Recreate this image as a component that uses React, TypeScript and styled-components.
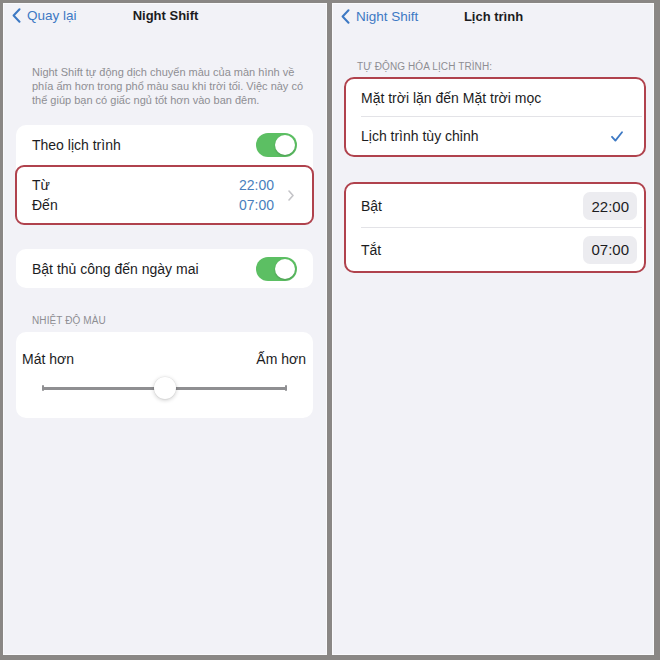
import React from "react";
import styled, { createGlobalStyle } from "styled-components";

const Global = createGlobalStyle`
  html, body { margin: 0; padding: 0; background: #8a8785; }
  body { font-family: "Liberation Sans", Arial, sans-serif; -webkit-font-smoothing: antialiased; }
`;

const BLUE = "#3d79c4";
const RED = "#b0424d";

const Frame = styled.div`
  width: 660px;
  height: 660px;
  box-sizing: border-box;
  padding: 3px 6px 5px 3px;
  display: flex;
  gap: 5px;
  background: #8a8785;
`;

const Panel = styled.div<{ $w: number }>`
  width: ${(p) => p.$w}px;
  height: 652px;
  flex: none;
  background: #f2f2f7;
  display: flex;
  flex-direction: column;
  box-sizing: border-box;
  box-shadow: inset 0 0 0 1px #fafafc;
`;

const NavBar = styled.div<{ $h: number }>`
  display: grid;
  grid-template-columns: 1fr auto 1fr;
  align-items: center;
  height: ${(p) => p.$h}px;
  padding: 0 8px 0 9px;
`;

const BackLink = styled.div`
  display: flex;
  align-items: center;
  gap: 6px;
  color: ${BLUE};
  font-size: 13.5px;
  white-space: nowrap;
`;

const Title = styled.div`
  font-size: 13px;
  font-weight: 700;
  color: #1c1c1e;
  white-space: nowrap;
`;

const Description = styled.p`
  margin: 38px 0 0 29px;
  font-size: 11px;
  line-height: 14px;
  color: #8e8e93;
`;

const Card = styled.div<{ $mt: number }>`
  margin: ${(p) => p.$mt}px 14px 0 13px;
  background: #ffffff;
  border-radius: 10px;
`;

const Row = styled.div<{ $h: number }>`
  display: flex;
  align-items: center;
  justify-content: space-between;
  height: ${(p) => p.$h}px;
  padding: 0 16px;
  font-size: 14px;
  color: #1c1c1e;
`;

const Toggle = styled.div`
  width: 41px;
  height: 24px;
  border-radius: 12px;
  background: #5cbf63;
  position: relative;
  flex: none;
`;

const Knob = styled.div`
  position: absolute;
  right: 2px;
  top: 2px;
  width: 20px;
  height: 20px;
  border-radius: 50%;
  background: #fff;
  box-shadow: 0 1px 2px rgba(0, 0, 0, 0.2);
`;

const InlineHighlight = styled.div`
  margin: 0 -1px;
  height: 60px;
  box-sizing: border-box;
  border: 2px solid ${RED};
  border-radius: 9px;
  display: flex;
  align-items: center;
  padding: 0 18px 0 15px;
  font-size: 14px;
  line-height: 20px;
  color: #1c1c1e;
`;

const Stack = styled.div<{ $align: string; $color: string }>`
  display: flex;
  flex-direction: column;
  align-items: ${(p) => p.$align};
  color: ${(p) => p.$color};
`;

const Spacer = styled.div`
  flex: 1;
`;

const ChevronBox = styled.div`
  margin-left: 14px;
  display: flex;
  align-items: center;
`;

const SectionHeader = styled.div<{ $mt: number; $mb: number; $ml: number }>`
  margin: ${(p) => p.$mt}px 0 ${(p) => p.$mb}px ${(p) => p.$ml}px;
  font-size: 10px;
  line-height: 12px;
  color: #8e8e93;
  text-transform: uppercase;
  letter-spacing: 0.1px;
`;

const SliderCard = styled.div`
  margin: 0 14px 0 13px;
  background: #fff;
  border-radius: 10px;
  padding: 19px 7px 19px 6px;
`;

const SliderLabels = styled.div`
  display: flex;
  justify-content: space-between;
  font-size: 14px;
  line-height: 16px;
  color: #1c1c1e;
`;

const SliderTrack = styled.div`
  position: relative;
  margin: 10px 19px 0 20px;
  height: 22px;
  display: flex;
  align-items: center;
`;

const TrackLine = styled.div`
  flex: 1;
  height: 3px;
  background: #8f8f92;
`;

const TrackCap = styled.div`
  width: 2px;
  height: 6px;
  background: #8f8f92;
  border-radius: 1px;
`;

const Thumb = styled.div`
  position: absolute;
  top: 0;
  width: 22px;
  height: 22px;
  margin-left: -11px;
  border-radius: 50%;
  background: #fff;
  box-shadow: 0 1px 4px rgba(0, 0, 0, 0.22), 0 0 0 0.5px rgba(0, 0, 0, 0.05);
`;

const BoxedGroup = styled.div<{ $mt: number }>`
  margin: ${(p) => p.$mt}px 8px 0 12px;
  background: #fff;
  border: 2px solid ${RED};
  border-radius: 10px;
  overflow: hidden;
`;

const ListRow = styled.div<{ $h: number; $sep?: boolean }>`
  position: relative;
  display: flex;
  align-items: center;
  justify-content: space-between;
  height: ${(p) => p.$h}px;
  padding: 0 7px 0 15px;
  font-size: 14px;
  color: #1c1c1e;
  ${(p) =>
    p.$sep
      ? `&::after { content: ""; position: absolute; left: 15px; right: 2px; bottom: 0; height: 1px; background: #e3e3e7; }`
      : ""}
`;

const CheckWrap = styled.div`
  margin-right: 14px;
  display: flex;
`;

const TimePill = styled.div`
  height: 28px;
  display: flex;
  align-items: center;
  padding: 0 8px;
  border-radius: 7px;
  background: #ececf0;
  font-size: 15px;
  color: #1c1c1e;
`;

const BackChevron = () => (
  <svg width="9" height="15" viewBox="0 0 9 15">
    <path d="M7.5 1.2 L1.6 7.5 L7.5 13.8" fill="none" stroke={BLUE} strokeWidth="2" strokeLinecap="round" strokeLinejoin="round" />
  </svg>
);

const RowChevron = () => (
  <svg width="6" height="11" viewBox="0 0 6 11">
    <path d="M1 1 L5 5.5 L1 10" fill="none" stroke="#c4c4c8" strokeWidth="1.6" strokeLinecap="round" strokeLinejoin="round" />
  </svg>
);

const Check = () => (
  <svg width="12" height="11" viewBox="0 0 12 11">
    <path d="M1 5.8 L4.4 9.6 L11 1.2" fill="none" stroke={BLUE} strokeWidth="1.8" strokeLinecap="round" strokeLinejoin="round" />
  </svg>
);

const Switch = () => (
  <Toggle>
    <Knob />
  </Toggle>
);

export default function App() {
  const warmth = 0.5;
  return (
    <>
      <Global />
      <Frame>
        <Panel $w={324}>
          <NavBar $h={24}>
            <BackLink>
              <BackChevron />
              Quay lại
            </BackLink>
            <Title>Night Shift</Title>
            <div />
          </NavBar>
          <Description>
            Night Shift tự động dịch chuyển màu của màn hình về
            <br />
            phía ấm hơn trong phổ màu sau khi trời tối. Việc này có
            <br />
            thể giúp bạn có giấc ngủ tốt hơn vào ban đêm.
          </Description>
          <Card $mt={18}>
            <Row $h={40}>
              Theo lịch trình
              <Switch />
            </Row>
            <InlineHighlight>
              <Stack $align="flex-start" $color="#1c1c1e">
                <span>Từ</span>
                <span>Đến</span>
              </Stack>
              <Spacer />
              <Stack $align="flex-end" $color="#4a7fbd">
                <span>22:00</span>
                <span>07:00</span>
              </Stack>
              <ChevronBox>
                <RowChevron />
              </ChevronBox>
            </InlineHighlight>
          </Card>
          <Card $mt={24}>
            <Row $h={39}>
              Bật thủ công đến ngày mai
              <Switch />
            </Row>
          </Card>
          <SectionHeader $mt={27} $mb={5} $ml={29}>
            Nhiệt độ màu
          </SectionHeader>
          <SliderCard>
            <SliderLabels>
              <span>Mát hơn</span>
              <span>Ấm hơn</span>
            </SliderLabels>
            <SliderTrack>
              <TrackCap />
              <TrackLine />
              <TrackCap />
              <Thumb style={{ left: `${warmth * 100}%` }} />
            </SliderTrack>
          </SliderCard>
        </Panel>
        <Panel $w={322}>
          <NavBar $h={26}>
            <BackLink>
              <BackChevron />
              Night Shift
            </BackLink>
            <Title>Lịch trình</Title>
            <div />
          </NavBar>
          <SectionHeader $mt={32} $mb={4} $ml={25}>
            Tự động hóa lịch trình:
          </SectionHeader>
          <BoxedGroup $mt={0}>
            <ListRow $h={38} $sep>
              Mặt trời lặn đến Mặt trời mọc
            </ListRow>
            <ListRow $h={38}>
              Lịch trình tùy chỉnh
              <CheckWrap>
                <Check />
              </CheckWrap>
            </ListRow>
          </BoxedGroup>
          <BoxedGroup $mt={25}>
            <ListRow $h={44} $sep>
              Bật
              <TimePill>22:00</TimePill>
            </ListRow>
            <ListRow $h={43}>
              Tắt
              <TimePill>07:00</TimePill>
            </ListRow>
          </BoxedGroup>
        </Panel>
      </Frame>
    </>
  );
}
